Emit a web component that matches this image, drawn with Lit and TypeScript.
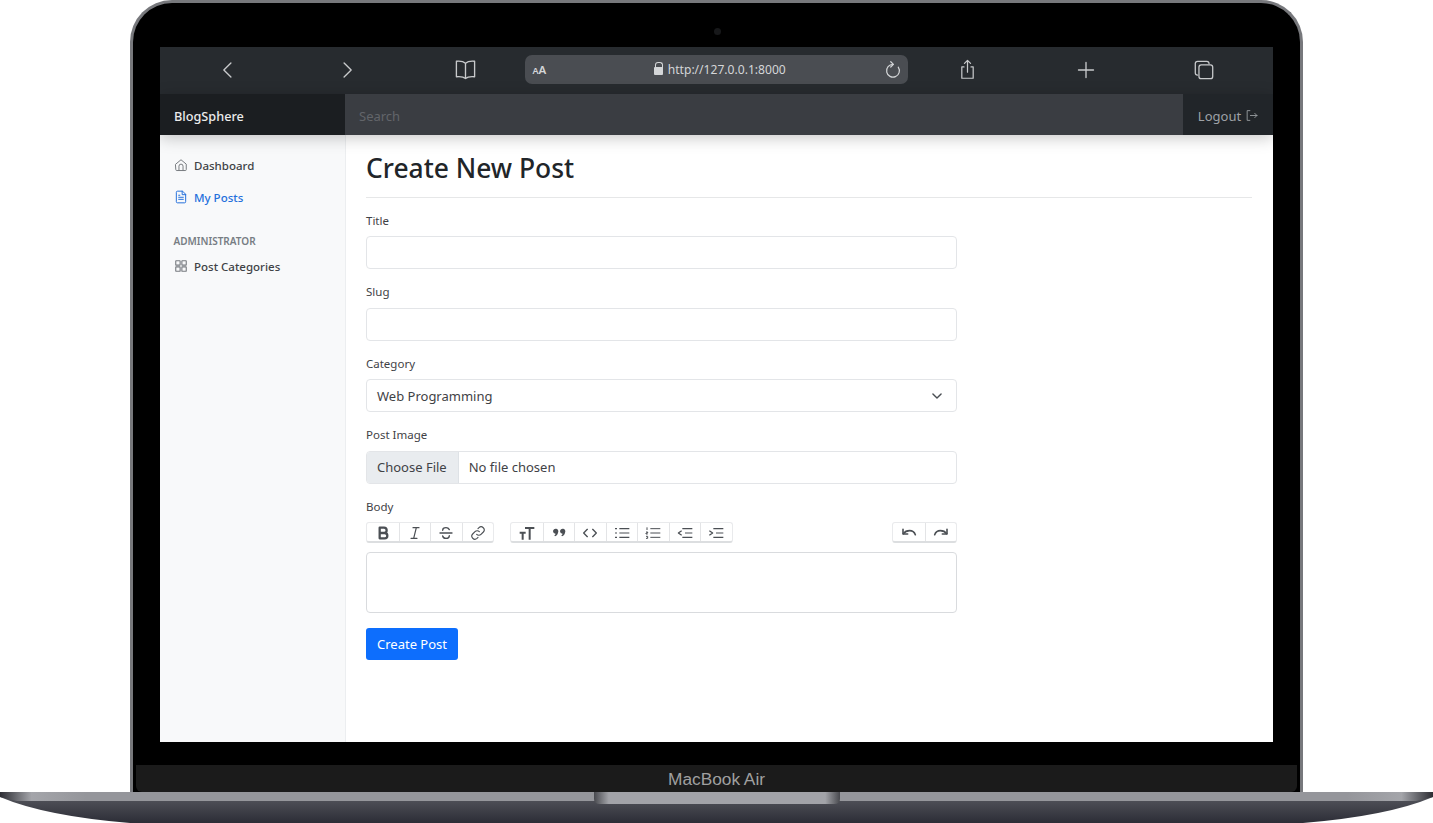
import { LitElement, html, css, svg } from 'lit';
import { customElement } from 'lit/decorators.js';

const ic = (body: unknown, size = 14, sw = 1.5, box = 24) => html`<svg
  width=${size} height=${size} viewBox="0 0 ${box} ${box}" fill="none"
  stroke="currentColor" stroke-width=${sw} stroke-linecap="round" stroke-linejoin="round">${body}</svg>`;

// browser toolbar icons
const back = svg`<path d="M15.5 3.5 7 12l8.5 8.5"/>`;
const forward = svg`<path d="M8.5 3.5 17 12l-8.5 8.5"/>`;
const book = svg`<path d="M12 5.5C10 3.6 6.5 3 2.5 3.4v16.2c4-.4 7.5 0 9.5 1.9 2-1.9 5.5-2.3 9.5-1.9V3.4C17.5 3 14 3.6 12 5.5ZM12 5.5v16"/>`;
const reload = svg`<path d="M12 4.5a8.5 8.5 0 1 0 7 3.7"/><path d="M9 1l3.5 3.5L9 8"/>`;
const share = svg`<path d="M8 9H5.5v13h13V9H16"/><path d="M12 15V1.5M8.5 5 12 1.5 15.5 5"/>`;
const plus = svg`<path d="M12 3v18M3 12h18"/>`;
const tabs = svg`<path d="M5 17.5c-1.500 0-2.500-1-2.500-2.500V5C2.500 3.500 3.500 2.500 5 2.500h10c1.500 0 2.500 1 2.500 2.500"/><rect x="6.5" y="6.5" width="15" height="15" rx="2.5"/>`;

// sidebar and navbar icons
const home = svg`<path d="M3 10.5 12 3l9 7.5V20a1.500 1.500 0 0 1-1.500 1.500h-15A1.500 1.500 0 0 1 3 20Z"/><path d="M8.5 21.5V14a3.500 3.500 0 0 1 7 0v7.500"/>`;
const file = svg`<path d="M14 2H6a2 2 0 0 0-2 2v16a2 2 0 0 0 2 2h12a2 2 0 0 0 2-2V8Z"/><path d="M14 2v6h6M8 12.5h8M8 16h8M8 9h2"/>`;
const grid = svg`<rect x="3" y="3" width="7.5" height="7.5" rx=".5"/><rect x="13.5" y="3" width="7.5" height="7.5" rx=".5"/><rect x="3" y="13.5" width="7.5" height="7.5" rx=".5"/><rect x="13.5" y="13.5" width="7.5" height="7.5" rx=".5"/>`;
const logout = svg`<path d="M9 3H4v18h5"/><path d="M10 12h12M18 8l4 4-4 4"/>`;

// editor toolbar icons
const bold = svg`<path d="M7 4h6.500a4 4 0 0 1 0 8H7Zm0 8h7.500a4 4 0 0 1 0 8H7Z" stroke-width="3.4"/>`;
const italic = svg`<path d="M9 4h9M6 20h9M14 4l-4 16" stroke-width="1.8"/>`;
const strike = svg`<path d="M3 12h18M17 7c-1-2-3-3-5-3-3 0-5 1.500-5 4M7 16.500c.500 2.300 2.500 3.500 5 3.500s5-1.300 5-4" stroke-width="2"/>`;
const link = svg`<path d="M10 14a4.500 4.500 0 0 0 6.500 0l3.500-3.500A4.600 4.600 0 0 0 13.500 4l-1.500 1.500M14 10a4.500 4.500 0 0 0-6.500 0L4 13.500A4.600 4.600 0 0 0 10.500 20l1.500-1.500" stroke-width="1.7"/>`;
const heading = svg`<path d="M9 4.500h14M16 4.500V22M1 11.500h9M5.500 11.500V22" stroke-width="3" stroke-linecap="butt"/>`;
const quote = svg`<path fill="currentColor" stroke="none" d="M3 9.500a4 4 0 1 1 7.500 2c-.500 2.500-2 4.500-4.500 5.500l-1-1.500c1-.7 1.700-1.500 2-2.500A3.800 3.800 0 0 1 3 9.500Zm10.500 0a4 4 0 1 1 7.500 2c-.500 2.500-2 4.500-4.500 5.500l-1-1.500c1-.7 1.700-1.500 2-2.500a3.800 3.800 0 0 1-4-3.500Z"/>`;
const code = svg`<path d="M8 6.500 2.500 12 8 17.500M16 6.500l5.500 5.500-5.500 5.500" stroke-width="2"/>`;
const bullets = svg`<path d="M8 5.500h15M8 12h15M8 18.500h15M1.500 5.500h3M1.500 12h3M1.500 18.500h3" stroke-width="1.8" stroke-linecap="butt"/>`;
const numbers = svg`<path d="M8 5.500h15M8 12h15M8 18.500h15M3 3.500v4M1.500 10.500h2.500v1.500H1.500v1.500h2.500M1.500 17h2.500v3H1.500" stroke-width="1.5" stroke-linecap="butt"/>`;
const outdent = svg`<path d="M8 5.500h15M12 12h11M8 18.500h15M7 8.500 2 12l5 3.500" stroke-width="1.8" stroke-linecap="butt"/>`;
const indent = svg`<path d="M8 5.500h15M12 12h11M8 18.500h15M2 8.500 7 12l-5 3.500" stroke-width="1.8" stroke-linecap="butt"/>`;
const undo = svg`<path d="M3 6.500v7h7" stroke-width="2.4"/><path d="M3.500 13C6 9.500 9.500 8.500 13 8.500c4 0 7 2 8.500 6" stroke-width="2.4"/>`;
const redo = svg`<path d="M21 6.500v7h-7" stroke-width="2.4"/><path d="M20.500 13C18 9.500 14.500 8.500 11 8.500c-4 0-7 2-8.500 6" stroke-width="2.4"/>`;

@customElement('app-root')
export class AppRoot extends LitElement {
  static styles = css`
    :host {
      display: block;
      width: 1433px;
      height: 823px;
      overflow: hidden;
      background: #fff;
      font-family: 'Noto Sans', 'Open Sans', sans-serif;
    }
    * { box-sizing: border-box; }

    /* laptop */
    .lid {
      position: relative;
      width: 1173px;
      height: 792px;
      margin-left: 130px;
      padding: 44px 27px 0;
      display: flex;
      flex-direction: column;
      background: #000;
      border: 3px solid #77787c;
      border-bottom: 0;
      border-radius: 42px 42px 0 0;
    }
    .camera {
      position: absolute;
      top: 25px;
      left: 581px;
      width: 7px;
      height: 7px;
      border-radius: 50%;
      background: #17181a;
    }
    .screen {
      height: 695px;
      display: flex;
      flex-direction: column;
      background: #fff;
      overflow: hidden;
    }
    .chin {
      margin: 23px -24px 0;
      height: 27px;
      padding-top: 2px;
      display: flex;
      align-items: center;
      justify-content: center;
      background: #1b1b1b;
      border-radius: 0 0 6px 6px;
      color: #a0a0a0;
      font: 17.3px 'Liberation Sans', Arial, sans-serif;
    }
    .base { display: block; }

    /* browser bar */
    .browser {
      height: 47px;
      flex: none;
      display: flex;
      align-items: center;
      padding: 0 9.5px 2px 9px;
      background: #272b2f;
      color: #c8cacc;
    }
    .cell {
      width: 118.5px;
      flex: none;
      display: flex;
      justify-content: center;
    }
    .url {
      flex: 1;
      height: 29px;
      display: flex;
      align-items: center;
      padding: 0 6px 0 8px;
      border-radius: 7px;
      background: #4a4d52;
      color: #d4d6d8;
    }
    .aa { font-size: 11.5px; font-weight: 600; width: 18px; white-space: nowrap; }
    .aa b { font-size: 9px; font-weight: 600; }
    .addr {
      flex: 1;
      display: flex;
      align-items: center;
      justify-content: center;
      gap: 5px;
      margin-left: 5px;
      font-size: 12.1px;
    }
    .lock { width: 9px; height: 8px; margin-top: 3px; position: relative; background: #d4d6d8; border-radius: 1px; }
    .lock::before {
      content: '';
      position: absolute;
      left: 1.5px;
      top: -5px;
      width: 6px;
      height: 6px;
      border: 1.5px solid #d4d6d8;
      border-bottom: 0;
      border-radius: 3px 3px 0 0;
    }

    /* navbar */
    .nav {
      height: 41px;
      flex: none;
      display: flex;
      align-items: stretch;
      position: relative;
      box-shadow: 0 3px 16px rgba(0, 0, 0, 0.22);
      font-size: 13px;
    }
    .nav > div { padding-top: 3px; }
    .nav > .logout { padding-top: 2px; }
    .brand {
      width: 185px;
      display: flex;
      align-items: center;
      padding-left: 14px;
      background: #1b1e21;
      color: #ececec;
      font-size: 12.7px;
      font-weight: 500;
    }
    .search {
      flex: 1;
      display: flex;
      align-items: center;
      padding-left: 14px;
      background: #3a3d42;
      color: #62656a;
    }
    .logout {
      width: 90px;
      display: flex;
      align-items: center;
      justify-content: center;
      gap: 4px;
      background: #212529;
      color: #9ea2a6;
    }

    /* page */
    .body { flex: 1; display: flex; min-height: 0; }
    .side {
      width: 186px;
      flex: none;
      padding-top: 14px;
      background: #f8f9fa;
      border-right: 1px solid #eceef0;
      font-size: 11.5px;
      font-weight: 500;
    }
    .item {
      height: 32px;
      display: flex;
      align-items: center;
      gap: 6px;
      padding-left: 14px;
      color: #3f4246;
    }
    .item svg { color: #777b80; }
    .item.active, .item.active svg { color: #2470dc; }
    .side h6 {
      margin: 19px 0 0;
      padding-left: 13.5px;
      height: 18px;
      display: flex;
      align-items: center;
      font-size: 10px;
      font-weight: 600;
      color: #777d83;
      text-transform: uppercase;
    }
    .main { flex: 1; padding: 0 21px 0 20px; }
    h1 {
      margin: 0;
      height: 63px;
      padding-top: 16px;
      font-size: 26.4px;
      line-height: 35px;
      font-weight: 500;
      color: #212529;
      border-bottom: 1px solid #e6e7e8;
    }
    form { width: 591px; }
    label {
      display: block;
      height: 15px;
      margin: 0 0 8.5px;
      font-size: 11.5px;
      line-height: 15px;
      color: #3f4246;
    }
    .field { margin-top: 14.5px; }
    .field + .field { margin-top: 15px; }
    .input {
      height: 33px;
      display: flex;
      align-items: center;
      justify-content: space-between;
      padding: 0 10px;
      border: 1px solid #e3e5e8;
      border-radius: 4px;
      background: #fff;
      font-size: 13px;
      color: #3f4246;
    }
    .input svg { color: #4a4e53; margin-right: 2px; }
    .filebox { padding: 0 0 0 0; justify-content: flex-start; overflow: hidden; line-height: 33px; }
    .filebtn {
      height: 100%;
      display: flex;
      align-items: center;
      padding: 1px 11px 0 10px;
      margin-right: 10px;
      background: #e9ecef;
      border-right: 1px solid #dee2e6;
    }
    .filename { padding-top: 1px; }
    .tools { display: flex; justify-content: space-between; height: 21px; }
    .left { display: flex; gap: 16px; }
    .group {
      display: flex;
      height: 21px;
      border: 1px solid #e9eaec;
      border-bottom: 2px solid #dcdee0;
      border-radius: 3px;
      color: #4b4f54;
    }
    .group span {
      width: 31.5px;
      padding-top: 1px;
      display: flex;
      align-items: center;
      justify-content: center;
      border-left: 1px solid #e3e4e6;
    }
    .group span:first-child { border-left: 0; }
    .editor {
      height: 61px;
      margin-top: 9px;
      border: 1px solid #d9dbde;
      border-radius: 4px;
    }
    .submit {
      width: 92px;
      height: 32px;
      margin-top: 15px;
      border-radius: 3px;
      display: flex;
      align-items: center;
      justify-content: center;
      background: #0d6efd;
      color: #fff;
      font-size: 13px;
    }
  `;

  private tool(icons: unknown[]) {
    return html`<div class="group">${icons.map((i) => html`<span>${ic(i, 16)}</span>`)}</div>`;
  }

  render() {
    return html`
      <div class="lid">
        <div class="camera"></div>
        <div class="screen">
          <div class="browser">
            <div class="cell">${ic(back, 20, 1.6)}</div>
            <div class="cell">${ic(forward, 20, 1.6)}</div>
            <div class="cell">${ic(book, 23, 1.4)}</div>
            <div class="url">
              <div class="aa"><b>A</b>A</div>
              <div class="addr"><span class="lock"></span>http://127.0.0.1:8000</div>
              ${ic(reload, 18, 1.6)}
            </div>
            <div class="cell">${ic(share, 21, 1.4)}</div>
            <div class="cell">${ic(plus, 20, 1.6)}</div>
            <div class="cell">${ic(tabs, 22, 1.4)}</div>
          </div>
          <div class="nav">
            <div class="brand">BlogSphere</div>
            <div class="search">Search</div>
            <div class="logout">Logout ${ic(logout, 13, 1.6)}</div>
          </div>
          <div class="body">
            <div class="side">
              <div class="item">${ic(home, 14, 1.7)}Dashboard</div>
              <div class="item active">${ic(file, 14, 1.7)}My Posts</div>
              <h6>Administrator</h6>
              <div class="item">${ic(grid, 14, 1.9)}Post Categories</div>
            </div>
            <div class="main">
              <h1>Create New Post</h1>
              <form>
                <div class="field"><label>Title</label><div class="input"></div></div>
                <div class="field"><label>Slug</label><div class="input"></div></div>
                <div class="field">
                  <label>Category</label>
                  <div class="input">Web Programming ${ic(svg`<path d="M5 8.5l7 7 7-7"/>`, 14, 2.4)}</div>
                </div>
                <div class="field">
                  <label>Post Image</label>
                  <div class="input filebox">
                    <div class="filebtn">Choose File</div>
                    <div class="filename">No file chosen</div>
                  </div>
                </div>
                <div class="field">
                  <label>Body</label>
                  <div class="tools">
                    <div class="left">
                      ${this.tool([bold, italic, strike, link])}
                      ${this.tool([heading, quote, code, bullets, numbers, outdent, indent])}
                    </div>
                    ${this.tool([undo, redo])}
                  </div>
                  <div class="editor"></div>
                </div>
                <div class="submit">Create Post</div>
              </form>
            </div>
          </div>
        </div>
        <div class="chin">MacBook Air</div>
      </div>
      <svg class="base" width="1433" height="31" viewBox="0 0 1433 31">
        <defs>
          <linearGradient id="under" x1="0" y1="0" x2="0" y2="1">
            <stop offset="0" stop-color="#5a5b62" />
            <stop offset="1" stop-color="#2c2d36" />
          </linearGradient>
          <linearGradient id="strip" x1="0" y1="0" x2="1" y2="0">
            <stop offset="0" stop-color="#2c2d33" />
            <stop offset="0.022" stop-color="#a4a5aa" />
            <stop offset="0.06" stop-color="#95969b" />
            <stop offset="0.94" stop-color="#95969b" />
            <stop offset="0.978" stop-color="#a4a5aa" />
            <stop offset="1" stop-color="#2c2d33" />
          </linearGradient>
          <linearGradient id="notch" x1="0" y1="0" x2="1" y2="0">
            <stop offset="0" stop-color="#48494e" />
            <stop offset="0.06" stop-color="#a2a3a8" />
            <stop offset="0.94" stop-color="#a2a3a8" />
            <stop offset="1" stop-color="#48494e" />
          </linearGradient>
        </defs>
        <path d="M0 0H1433V5Q1388 24 1303 31H130Q45 24 0 5Z" fill="url(#under)" />
        <path d="M0 0H1433V5Q1425 7 1416 9H17Q8 7 0 5Z" fill="url(#strip)" />
        <path d="M594 0H840V7Q840 12 834 12H600Q594 12 594 7Z" fill="url(#notch)" />
      </svg>
    `;
  }
}
